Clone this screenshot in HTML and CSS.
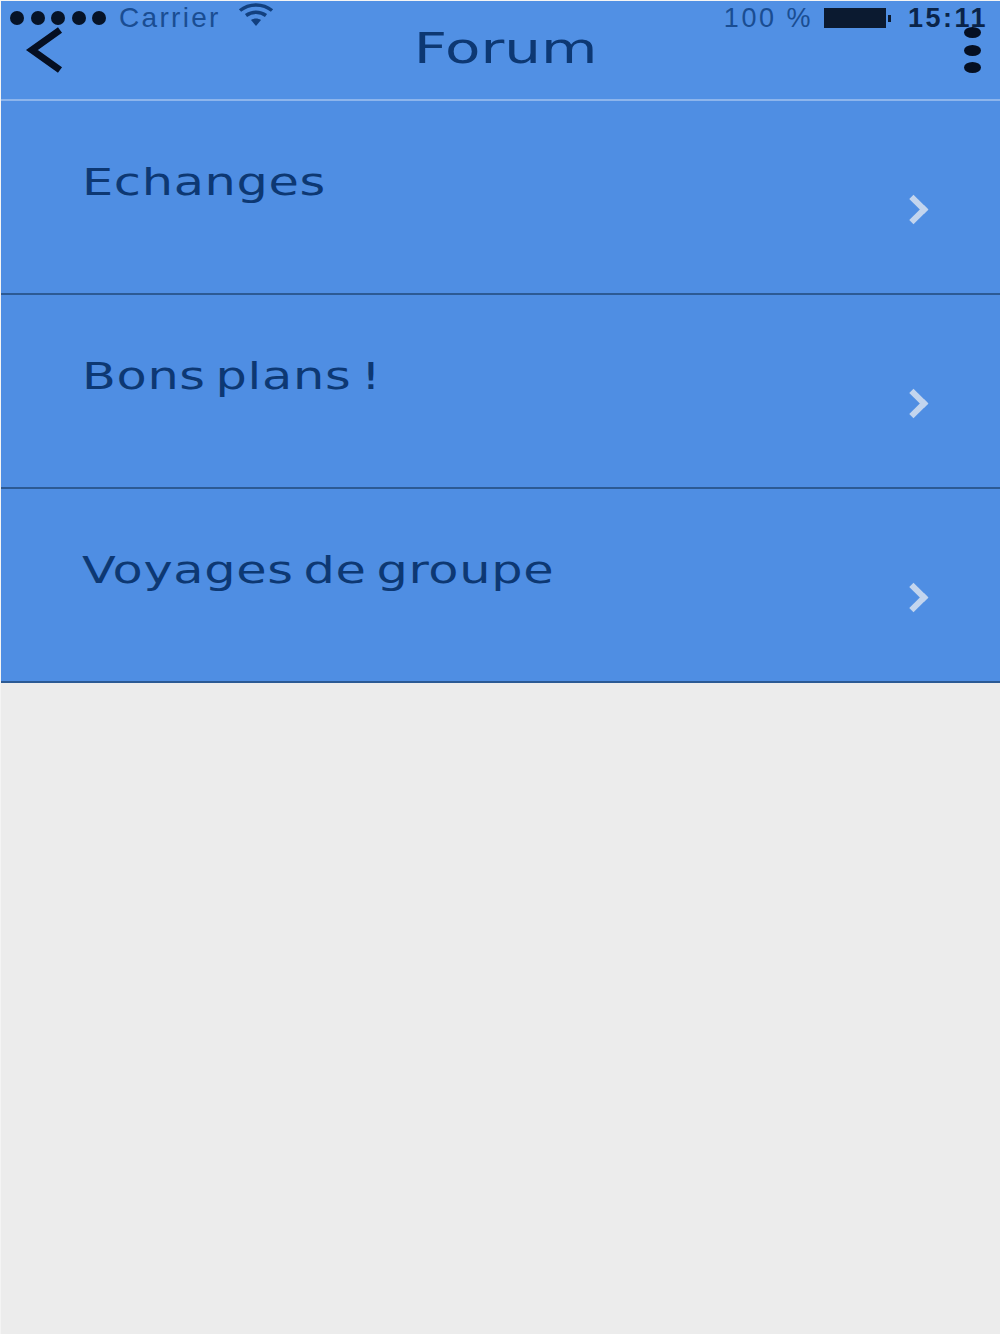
FILE: index.html
```html
<!doctype html>
<html lang="fr">
<head>
<meta charset="UTF-8">
<title>Forum</title>
<link rel="stylesheet" href="styles.css">
</head>
<body>
	<header class="top_bar">
		<!-- barre d'etat, passe au dessus de la navigation -->
		<div class="status">
			<div class="status_left">
				<span class="signal"><i></i><i></i><i></i><i></i><i></i></span>
				<span class="carrier">Carrier</span>
				<svg class="wifi" width="36" height="24" viewBox="0 0 36 24">
					<path d="M2 7.5C11 0 25 0 34 7.5" fill="none" stroke="#12407f" stroke-width="3.5"/>
					<path d="M8 12.5C14 8 22 8 28 12.5" fill="none" stroke="#12407f" stroke-width="3.5"/>
					<path d="M13 17C16 15 20 15 23 17L18 23Z" fill="#12407f"/>
				</svg>
			</div>
			<div class="status_right">
				<span class="percent">100 %</span>
				<span class="battery"></span>
				<span class="clock">15:11</span>
			</div>
		</div>
		<nav class="nav">
			<svg class="back" width="40" height="48" viewBox="0 0 40 48">
				<path d="M35 4L7 24L35 44" fill="none" stroke="#050f22" stroke-width="7"/>
			</svg>
			<h1>Forum</h1>
			<span class="more"><i></i><i></i><i></i></span>
		</nav>
	</header>

	<ul class="topics">
		<li><span>Echanges</span><b class="arrow"></b></li>
		<li><span>Bons plans !</span><b class="arrow"></b></li>
		<li><span>Voyages de groupe</span><b class="arrow"></b></li>
	</ul>
</body>
</html>
```

FILE: styles.css
```css
html, body{
	margin:0; padding:0;
	height:100%;
}
body{
	background-color:#ececec;
	font-family:"DejaVu Sans", sans-serif;
	color:#0f3d7c;
	border-left:1px solid #f4f4f4;
	box-sizing:border-box;
}
.top_bar{
	position:relative;
	height:98px;
	background-color:#5190e4;
	border-top:1px solid #f4f4f4;
	border-bottom:2px solid #8db5ec;
}
.status{
	position:absolute;
	top:0; left:9px; right:12px;
	height:34px;
	display:flex;
	justify-content:space-between;
	align-items:center;
}
.status_left, .status_right{
	display:flex;
	align-items:center;
}
.signal{
	display:flex;
	gap:6.5px;
}
.signal i{
	width:14px; height:14px;
	border-radius:50%;
	background-color:#061327;
}
.carrier{
	margin-left:13px;
	font-family:"Liberation Sans", sans-serif;
	font-size:28px;
	letter-spacing:2.3px;
	color:#1a4d92;
}
.wifi{
	margin-left:17px;
	margin-top:-6px;
}
.percent{
	font-family:"Liberation Sans", sans-serif;
	font-size:27px;
	letter-spacing:2.5px;
	color:#1a4d92;
}
.battery{
	position:relative;
	width:62px; height:20px;
	margin-left:11px;
	margin-right:8px;
	background-color:#0b1a30;
}
.battery:after{
	content:"";
	position:absolute;
	right:-5px; top:7px;
	width:3px; height:7px;
	background-color:#0b1a30;
}
.clock{
	margin-left:14px;
	font-family:"Liberation Sans", sans-serif;
	font-weight:bold;
	font-size:27px;
	letter-spacing:2.5px;
	color:#0a2449;
}
.nav{
	height:98px;
	display:flex;
	justify-content:space-between;
	align-items:flex-start;
	padding:0 19px 0 24px;
}
.back{
	margin-top:25px;
}
.nav h1{
	margin:23px 0 0 0;
	font-size:42px;
	font-weight:normal;
	line-height:50px;
	color:#0d3873;
	position:relative;
	left:-9px;
	transform:scaleX(1.38);
}
.more{
	display:flex;
	flex-direction:column;
	gap:6.5px;
	margin-top:26px;
}
.more i{
	width:17px; height:11px;
	border-radius:50%;
	background-color:#050f22;
}
.topics{
	list-style:none;
	margin:0; padding:0;
}
.topics li{
	height:192px;
	background-color:#4f8ee3;
	border-bottom:2px solid #2c5a94;
	display:flex;
	justify-content:space-between;
	align-items:flex-start;
	padding:0 76px 0 81px;
}
.topics li span{
	margin-top:57px;
	font-size:38px;
	line-height:48px;
	letter-spacing:0.5px;
	word-spacing:-5px;
	color:#0d3873;
	transform:scaleX(1.3);
	transform-origin:left center;
}
.arrow{
	width:15px; height:15px;
	margin-top:98px;
	border-top:6px solid #c3d5ee;
	border-right:6px solid #c3d5ee;
	transform:rotate(45deg);
}
```
